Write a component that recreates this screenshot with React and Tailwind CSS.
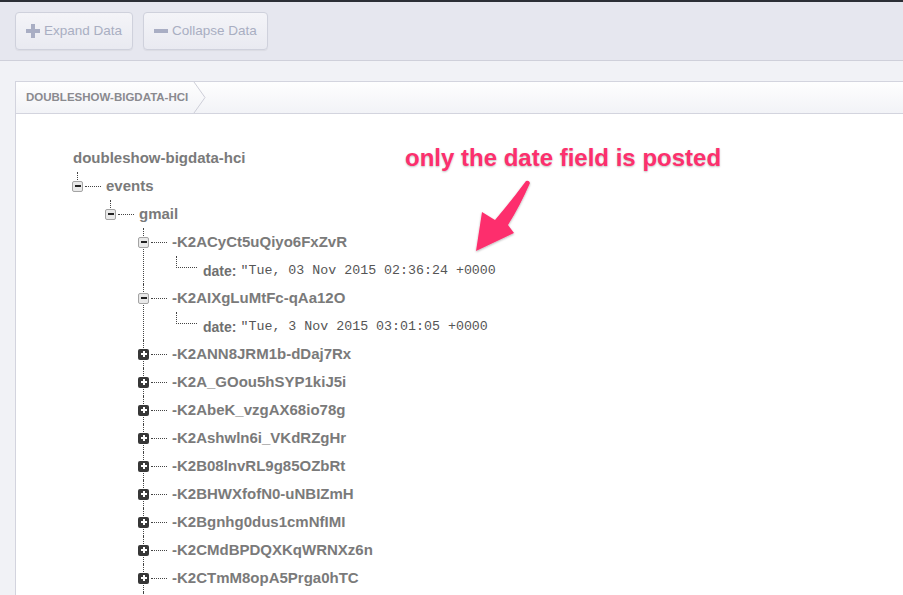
import React from 'react';

const line = 'border-dotted border-[#444]';

const Toggle = ({ open }) =>
  open ? (
    <span className="-ml-[6px] w-[11px] h-[11px] shrink-0 rounded-[2px] border border-[#a4a4a4] bg-[#e9e9e9] flex items-center justify-center">
      <span className="w-[6px] h-[2px] bg-[#222]" />
    </span>
  ) : (
    <span className="-ml-[6px] w-[11px] h-[11px] shrink-0 rounded-[2px] bg-[#373737] flex items-center justify-center relative">
      <span className="w-[6px] h-[2px] bg-white" />
      <span className="absolute w-[2px] h-[6px] bg-white" />
    </span>
  );

const Leaf = ({ label, value }) => (
  <div className="flex items-start">
    <div className={`w-[21px] h-[12px] shrink-0 border-l border-b ${line}`} />
    <div className="h-[28px] flex items-center ml-[6px] pt-[2px] whitespace-nowrap">
      <span className="font-bold text-[14px] text-[#6f6f6f]">{label}:</span>
      <span className="ml-[4px] text-[13.3px] text-[#555]" style={{ fontFamily: '"Liberation Mono", "Courier New", monospace' }}>
        {value}
      </span>
    </div>
  </div>
);

const Node = ({ label, open, last, children }) => (
  <div className="flex">
    <div className="w-px shrink-0 flex flex-col">
      <div className={`h-[14px] border-l ${line}`} />
      {!last && <div className={`flex-1 border-l ${line}`} />}
    </div>
    <div className="flex flex-col">
      <div className="h-[28px] flex items-center whitespace-nowrap">
        <Toggle open={open} />
        <span className={`ml-[2px] w-[16px] border-t ${line}`} />
        <span className="ml-[5px] font-bold text-[15px] text-[#7a7a7a]">{label}</span>
      </div>
      {open && children && <div className="ml-[32px] flex flex-col">{children}</div>}
    </div>
  </div>
);

const collapsed = [
  '-K2ANN8JRM1b-dDaj7Rx',
  '-K2A_GOou5hSYP1kiJ5i',
  '-K2AbeK_vzgAX68io78g',
  '-K2Ashwln6i_VKdRZgHr',
  '-K2B08lnvRL9g85OZbRt',
  '-K2BHWXfofN0-uNBIZmH',
  '-K2Bgnhg0dus1cmNfIMI',
  '-K2CMdBPDQXKqWRNXz6n',
  '-K2CTmM8opA5Prga0hTC',
];

const PlusIcon = () => (
  <svg width="14" height="14" viewBox="0 0 14 14">
    <path d="M5 0h4v5h5v4H9v5H5V9H0V5h5z" fill="#a9aec4" />
  </svg>
);

const MinusIcon = () => (
  <svg width="14" height="14" viewBox="0 0 14 14">
    <rect x="0" y="5" width="14" height="4" fill="#a9aec4" />
  </svg>
);

const Button = ({ icon, children }) => (
  <button className="h-[38px] px-[10px] flex items-center gap-[4px] rounded-[4px] border border-[#cfd1dc] bg-gradient-to-b from-[#f4f4f8] to-[#e9eaf1] shadow-[0_1px_1px_rgba(0,0,0,0.05)] text-[13.5px] text-[#a9aec2]">
    {icon}
    <span>{children}</span>
  </button>
);

export default function App() {
  return (
    <div
      className="relative w-full h-[595px] overflow-hidden bg-[#f1f2f6]"
      style={{ fontFamily: '"Liberation Sans", Arial, sans-serif' }}
    >
      <div className="h-[2px] bg-[#2c2f36]" />
      {/* Toolbar */}
      <div className="h-[59px] bg-[#e6e7ef] border-b border-[#cfd0da] flex items-start gap-[10px] pl-[15px] pt-[10px]">
        <Button icon={<PlusIcon />}>Expand Data</Button>
        <Button icon={<MinusIcon />}>Collapse Data</Button>
      </div>

      {/* Panel */}
      <div className="mt-[20px] ml-[15px] border-l border-t border-[#d3d4de] bg-white h-[600px]">
        <div className="h-[32px] border-b border-[#d3d4de] bg-gradient-to-b from-[#fefefe] to-[#f2f3f7] flex items-center">
          <span className="pl-[10px] font-bold text-[11.5px] text-[#8a8a8f]">DOUBLESHOW-BIGDATA-HCI</span>
          <svg className="ml-[5px]" width="14" height="31" viewBox="0 0 14 31">
            <polyline points="1,0 12,15.5 1,31" fill="none" stroke="#cdced8" strokeWidth="1" />
          </svg>
        </div>

        {/* Tree */}
        <div className="pl-[57px] pt-[30px]">
          <div className="h-[28px] flex items-center font-bold text-[15px] text-[#7a7a7a]">doubleshow-bigdata-hci</div>
          <div className="ml-[4px]">
            <Node label="events" open last>
              <Node label="gmail" open last>
                <Node label="-K2ACyCt5uQiyo6FxZvR" open>
                  <Leaf label="date" value={'"Tue, 03 Nov 2015 02:36:24 +0000'} />
                </Node>
                <Node label="-K2AIXgLuMtFc-qAa12O" open>
                  <Leaf label="date" value={'"Tue, 3 Nov 2015 03:01:05 +0000'} />
                </Node>
                {collapsed.map((k) => (
                  <Node key={k} label={k} />
                ))}
                <div className={`w-px h-[28px] border-l ${line}`} />
              </Node>
            </Node>
          </div>
        </div>
      </div>

      {/* Annotation */}
      <div
        className="absolute left-[405px] top-[146px] text-[24px] leading-[24px] font-bold text-[#fd2f6d] whitespace-nowrap"
        style={{ textShadow: '0 1px 2px rgba(0,0,0,0.25), 0 0 2px #fff' }}
      >
        only the date field is posted
      </div>
      <svg className="absolute left-[470px] top-[178px]" width="66" height="82" viewBox="0 0 66 82">
        <defs>
          <filter id="sh" x="-20%" y="-20%" width="140%" height="140%">
            <feDropShadow dx="0" dy="1" stdDeviation="1" floodColor="#000" floodOpacity="0.3" />
          </filter>
        </defs>
        <path
          d="M56 3 Q59 2 60 5 Q50 28 38 47 L44 55 L6 73 L12 34 L25 42 Q42 22 56 3 Z"
          fill="#fd2f6d"
          filter="url(#sh)"
        />
      </svg>
    </div>
  );
}
